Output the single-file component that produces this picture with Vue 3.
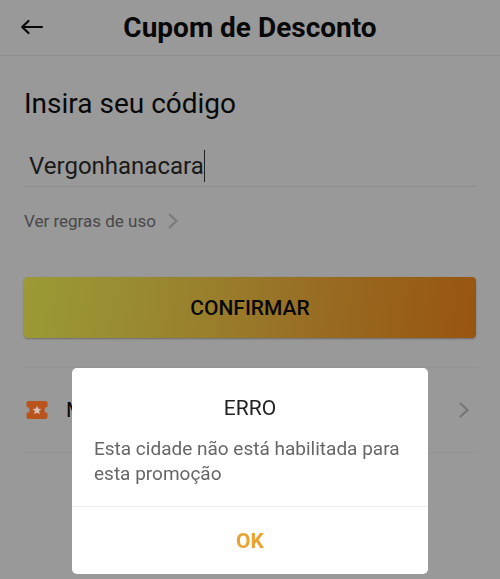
<script setup>
import { ref } from 'vue'

const code = ref('Vergonhanacara')
const dialogOpen = ref(true)
</script>

<template>
  <div class="screen">
    <header class="topbar">
      <button class="back" type="button" aria-label="Voltar">
        <svg width="24" height="18" viewBox="0 0 24 18" fill="none" stroke="currentColor" stroke-width="2.2" stroke-linecap="round" stroke-linejoin="round">
          <path d="M22 8H2.500M8.500 2L2.200 8L8.500 14" />
        </svg>
      </button>
      <h1>Cupom de Desconto</h1>
    </header>

    <main class="content">
      <label class="prompt" for="code">Insira seu código</label>
      <div class="field">
        <input id="code" v-model="code" type="text" spellcheck="false" autocomplete="off" />
        <span class="caret"></span>
      </div>
      <a class="rules" href="#regras">
        Ver regras de uso
        <svg width="10" height="18" viewBox="0 0 10 18" fill="none" stroke="currentColor" stroke-width="2">
          <path d="M1 2L8.500 9L1 16" />
        </svg>
      </a>
      <button class="confirm" type="button">CONFIRMAR</button>
      <a class="coupons" href="#cupons">
        <svg class="ticket" width="22" height="20" viewBox="0 0 22 20">
          <path fill="#b9541c" d="M2.500 1H19.500Q21.500 1 21.500 3V7A3 3 0 0 0 21.500 13V17Q21.500 19 19.500 19H2.500Q0.500 19 0.500 17V13A3 3 0 0 0 0.500 7V3Q0.500 1 2.500 1Z" />
          <path fill="#d2c5bd" d="M11 5.800L12.300 8.800L15.400 9L13 11.100L13.800 14.300L11 12.600L8.200 14.300L9 11.100L6.600 9L9.700 8.800Z" />
        </svg>
        <span class="coupons-label">M</span>
        <svg class="chevron" width="10" height="18" viewBox="0 0 10 18" fill="none" stroke="currentColor" stroke-width="2">
          <path d="M1 2L8.500 9L1 16" />
        </svg>
      </a>
    </main>

    <div v-if="dialogOpen" class="layer">
      <section class="dialog" role="alertdialog" aria-modal="true" aria-labelledby="dialog-title" aria-describedby="dialog-text">
        <h2 id="dialog-title">ERRO</h2>
        <p id="dialog-text">Esta cidade não está habilitada para esta promoção</p>
        <button class="ok" type="button" @click="dialogOpen = false">OK</button>
      </section>
    </div>
  </div>
</template>

<style>
body {
  background: #999;
}
</style>

<style scoped>
.screen {
  min-height: 100vh;
  box-sizing: border-box;
  font-family: Roboto, sans-serif;
  color: #080808;
  background: #999;
}

button,
input {
  margin: 0;
  padding: 0;
  border: 0;
  background: none;
  font: inherit;
  color: inherit;
}

a {
  color: inherit;
  text-decoration: none;
}

svg {
  display: block;
  flex: none;
}

.topbar {
  display: grid;
  grid-template-columns: 24px 1fr 24px;
  align-items: center;
  height: 55px;
  padding: 0 20px;
  border-bottom: 1px solid #8e8e8e;
}

h1 {
  margin: 0;
  font-size: 28px;
  line-height: 36px;
  font-weight: 700;
  text-align: center;
}

.content {
  display: flex;
  flex-direction: column;
  padding: 30px 24px 0;
}

.prompt {
  font-size: 28px;
  line-height: 36px;
}

.field {
  display: flex;
  align-items: center;
  height: 40px;
  margin-top: 24px;
  padding: 0 5px;
  border-bottom: 1px solid #8c8c8c;
  color: #1a1a1a;
}

.field input {
  field-sizing: content;
  outline: none;
  font-size: 24px;
  line-height: 32px;
}

.caret {
  width: 1px;
  height: 32px;
  background: #222;
}

.rules {
  display: flex;
  align-items: center;
  align-self: flex-start;
  gap: 12px;
  margin-top: 22px;
  font-size: 17px;
  line-height: 24px;
  color: #484848;
}

.rules svg {
  color: #7a7a7a;
}

.confirm {
  height: 61px;
  margin-top: 44px;
  border-radius: 4px;
  background: linear-gradient(97deg, #9a9a36 0%, #99872f 30%, #987428 55%, #98651d 75%, #985511 100%);
  box-shadow: 0 1px 2px rgba(0, 0, 0, 0.3);
  font-size: 21px;
  font-weight: 500;
}

.coupons {
  display: flex;
  align-items: center;
  height: 84px;
  margin-top: 29px;
  padding: 0 7px 0 2px;
  border-top: 1px solid #929292;
  border-bottom: 1px solid #929292;
}

.coupons-label {
  margin-left: 18px;
  font-size: 21px;
}

.chevron {
  margin-left: auto;
  color: #747474;
}

.layer {
  position: fixed;
  inset: 0;
  display: flex;
  align-items: flex-end;
  padding: 0 72px 5px;
}

.dialog {
  flex: 1;
  border-radius: 5px;
  background: #fff;
  overflow: hidden;
}

h2 {
  margin: 0;
  padding-top: 26px;
  font-size: 21px;
  line-height: 28px;
  font-weight: 400;
  text-align: center;
  color: #222;
}

p {
  margin: 0;
  padding: 14px 22px 20px;
  font-size: 19px;
  line-height: 25px;
  color: #666;
}

.ok {
  display: block;
  width: 100%;
  height: 68px;
  border-top: 1px solid #ececec;
  font-size: 21px;
  font-weight: 700;
  color: #e9a22f;
}
</style>
